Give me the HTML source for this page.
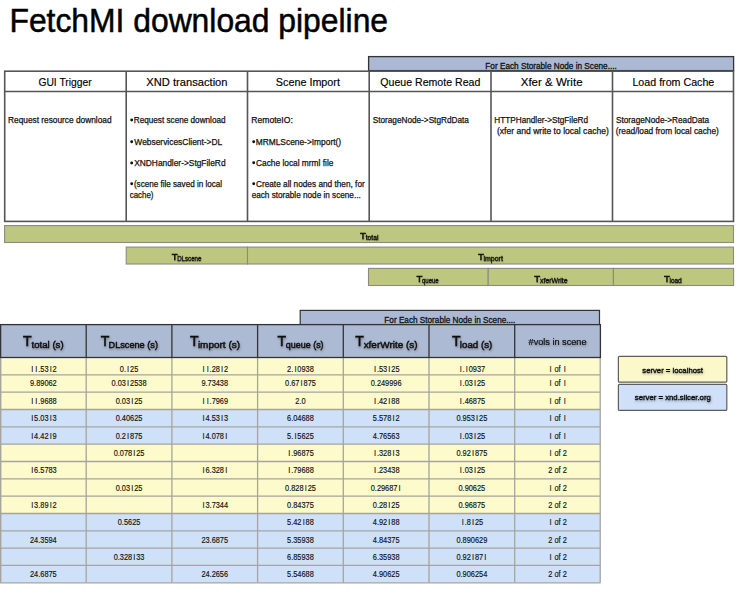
<!DOCTYPE html>
<html><head><meta charset="utf-8"><style>
html,body{margin:0;padding:0;background:#fff;width:751px;height:599px;overflow:hidden}
svg{display:block}
text{font-family:"Liberation Sans",sans-serif}
</style></head><body>
<svg width="751" height="599" viewBox="0 0 751 599">
<defs>
<filter id="sh" x="-20%" y="-50%" width="140%" height="200%"><feDropShadow dx="0.3" dy="0.8" stdDeviation="0.6" flood-color="#000" flood-opacity="0.3"/></filter>
<filter id="sh2" x="-20%" y="-50%" width="140%" height="200%"><feDropShadow dx="0.5" dy="1.2" stdDeviation="1" flood-color="#000" flood-opacity="0.35"/></filter>
</defs>
<rect width="751" height="599" fill="#fff"/>
<text x="9.45" y="31.80" font-size="33" fill="#000" text-anchor="start" textLength="378.62" lengthAdjust="spacingAndGlyphs" stroke="#000" stroke-width="0.5" >FetchMI download pipeline</text>
<rect x="368.6" y="56.6" width="365" height="14" fill="#abb9d4" stroke="#333" stroke-width="1.3"/>
<text x="485.34" y="68.60" font-size="8.8" fill="#111" text-anchor="start" textLength="131.43" lengthAdjust="spacingAndGlyphs" stroke="#111" stroke-width="0.3" >For Each Storable Node in Scene....</text>
<rect x="4.7" y="71.2" width="728.8" height="150.2" fill="#fff" stroke="#555" stroke-width="1.6"/>
<line x1="4.7" y1="91.5" x2="733.5" y2="91.5" stroke="#555" stroke-width="1.6"/>
<line x1="126.2" y1="71.2" x2="126.2" y2="221.4" stroke="#555" stroke-width="1.6"/>
<line x1="247.5" y1="71.2" x2="247.5" y2="221.4" stroke="#555" stroke-width="1.6"/>
<line x1="369.2" y1="71.2" x2="369.2" y2="221.4" stroke="#555" stroke-width="1.6"/>
<line x1="491" y1="71.2" x2="491" y2="221.4" stroke="#555" stroke-width="1.6"/>
<line x1="612.5" y1="71.2" x2="612.5" y2="221.4" stroke="#555" stroke-width="1.6"/>
<text x="38.38" y="85.60" font-size="11" fill="#000" text-anchor="start" textLength="53.30" lengthAdjust="spacingAndGlyphs" stroke="#000" stroke-width="0.15" >GUI Trigger</text>
<text x="146.32" y="85.60" font-size="11" fill="#000" text-anchor="start" textLength="81.21" lengthAdjust="spacingAndGlyphs" stroke="#000" stroke-width="0.15" >XND transaction</text>
<text x="275.81" y="85.60" font-size="11" fill="#000" text-anchor="start" textLength="64.17" lengthAdjust="spacingAndGlyphs" stroke="#000" stroke-width="0.15" >Scene Import</text>
<text x="380.32" y="85.60" font-size="11" fill="#000" text-anchor="start" textLength="99.97" lengthAdjust="spacingAndGlyphs" stroke="#000" stroke-width="0.15" >Queue Remote Read</text>
<text x="520.71" y="85.60" font-size="11" fill="#000" text-anchor="start" textLength="61.83" lengthAdjust="spacingAndGlyphs" stroke="#000" stroke-width="0.15" >Xfer &amp; Write</text>
<text x="632.45" y="85.60" font-size="11" fill="#000" text-anchor="start" textLength="81.85" lengthAdjust="spacingAndGlyphs" stroke="#000" stroke-width="0.15" >Load from Cache</text>
<text x="8.03" y="123.40" font-size="8.7" fill="#111" text-anchor="start" textLength="103.53" lengthAdjust="spacingAndGlyphs" stroke="#111" stroke-width="0.25" >Request resource download</text>
<circle cx="131.70" cy="120.00" r="1.45" fill="#111"/>
<text x="133.75" y="123.20" font-size="8.7" fill="#111" text-anchor="start" textLength="91.79" lengthAdjust="spacingAndGlyphs" stroke="#111" stroke-width="0.25" >Request scene download</text>
<circle cx="131.70" cy="141.80" r="1.45" fill="#111"/>
<text x="134.36" y="145.00" font-size="8.7" fill="#111" text-anchor="start" textLength="87.92" lengthAdjust="spacingAndGlyphs" stroke="#111" stroke-width="0.25" >WebservicesClient-&gt;DL</text>
<circle cx="131.70" cy="163.00" r="1.45" fill="#111"/>
<text x="134.19" y="166.20" font-size="8.7" fill="#111" text-anchor="start" textLength="91.36" lengthAdjust="spacingAndGlyphs" stroke="#111" stroke-width="0.25" >XNDHandler-&gt;StgFileRd</text>
<circle cx="131.70" cy="183.80" r="1.45" fill="#111"/>
<text x="133.91" y="187.00" font-size="8.7" fill="#111" text-anchor="start" textLength="88.21" lengthAdjust="spacingAndGlyphs" stroke="#111" stroke-width="0.25" >(scene file saved in local</text>
<text x="129.68" y="197.80" font-size="8.7" fill="#111" text-anchor="start" textLength="23.81" lengthAdjust="spacingAndGlyphs" stroke="#111" stroke-width="0.25" >cache)</text>
<text x="251.31" y="123.20" font-size="8.7" fill="#111" text-anchor="start" textLength="41.50" lengthAdjust="spacingAndGlyphs" stroke="#111" stroke-width="0.25" >RemoteIO:</text>
<circle cx="253.70" cy="141.80" r="1.45" fill="#111"/>
<text x="255.73" y="145.00" font-size="8.7" fill="#111" text-anchor="start" textLength="85.39" lengthAdjust="spacingAndGlyphs" stroke="#111" stroke-width="0.25" >MRMLScene-&gt;Import()</text>
<circle cx="253.70" cy="162.80" r="1.45" fill="#111"/>
<text x="255.98" y="166.00" font-size="8.7" fill="#111" text-anchor="start" textLength="77.40" lengthAdjust="spacingAndGlyphs" stroke="#111" stroke-width="0.25" >Cache local mrml file</text>
<circle cx="253.70" cy="183.80" r="1.45" fill="#111"/>
<text x="255.99" y="187.00" font-size="8.7" fill="#111" text-anchor="start" textLength="108.74" lengthAdjust="spacingAndGlyphs" stroke="#111" stroke-width="0.25" >Create all nodes and then, for</text>
<text x="251.67" y="198.00" font-size="8.7" fill="#111" text-anchor="start" textLength="109.08" lengthAdjust="spacingAndGlyphs" stroke="#111" stroke-width="0.25" >each storable node in scene...</text>
<text x="372.73" y="123.20" font-size="8.7" fill="#111" text-anchor="start" textLength="96.09" lengthAdjust="spacingAndGlyphs" stroke="#111" stroke-width="0.25" >StorageNode-&gt;StgRdData</text>
<text x="494.34" y="123.20" font-size="8.7" fill="#111" text-anchor="start" textLength="93.70" lengthAdjust="spacingAndGlyphs" stroke="#111" stroke-width="0.25" >HTTPHandler-&gt;StgFileRd</text>
<text x="496.99" y="134.00" font-size="8.7" fill="#111" text-anchor="start" textLength="111.84" lengthAdjust="spacingAndGlyphs" stroke="#111" stroke-width="0.25" >(xfer and write to local cache)</text>
<text x="615.93" y="123.20" font-size="8.7" fill="#111" text-anchor="start" textLength="93.30" lengthAdjust="spacingAndGlyphs" stroke="#111" stroke-width="0.25" >StorageNode-&gt;ReadData</text>
<text x="615.80" y="134.00" font-size="8.7" fill="#111" text-anchor="start" textLength="103.04" lengthAdjust="spacingAndGlyphs" stroke="#111" stroke-width="0.25" >(read/load from local cache)</text>
<rect x="4.6" y="225.6" width="728.90" height="16.90" fill="#bec77f" stroke="#8a8a80" stroke-width="1.1"/>
<rect x="126.2" y="247.1" width="121.30" height="16.90" fill="#bec77f" stroke="#8a8a80" stroke-width="1.1"/>
<rect x="247.5" y="247.1" width="486.00" height="16.90" fill="#bec77f" stroke="#8a8a80" stroke-width="1.1"/>
<rect x="368.5" y="268.4" width="119.70" height="17.10" fill="#bec77f" stroke="#8a8a80" stroke-width="1.1"/>
<rect x="488.2" y="268.4" width="125.20" height="17.10" fill="#bec77f" stroke="#8a8a80" stroke-width="1.1"/>
<rect x="613.4" y="268.4" width="120.20" height="17.10" fill="#bec77f" stroke="#8a8a80" stroke-width="1.1"/>
<g filter="url(#sh)">
<text x="359.91" y="239.10" font-size="9.6" fill="#111" text-anchor="start" stroke="#111" stroke-width="0.45" >T</text>
<text x="365.66" y="239.90" font-size="7.2" fill="#111" text-anchor="start" textLength="12.78" lengthAdjust="spacingAndGlyphs" stroke="#111" stroke-width="0.3" >total</text>
</g>
<g filter="url(#sh)">
<text x="171.81" y="260.20" font-size="9.6" fill="#111" text-anchor="start" stroke="#111" stroke-width="0.45" >T</text>
<text x="177.17" y="261.00" font-size="7.2" fill="#111" text-anchor="start" textLength="24.32" lengthAdjust="spacingAndGlyphs" stroke="#111" stroke-width="0.3" >DLscene</text>
</g>
<g filter="url(#sh)">
<text x="478.01" y="260.20" font-size="9.6" fill="#111" text-anchor="start" stroke="#111" stroke-width="0.45" >T</text>
<text x="483.41" y="261.00" font-size="7.2" fill="#111" text-anchor="start" textLength="19.45" lengthAdjust="spacingAndGlyphs" stroke="#111" stroke-width="0.3" >import</text>
</g>
<g filter="url(#sh)">
<text x="416.41" y="282.00" font-size="9.6" fill="#111" text-anchor="start" stroke="#111" stroke-width="0.45" >T</text>
<text x="422.02" y="282.80" font-size="7.2" fill="#111" text-anchor="start" textLength="16.65" lengthAdjust="spacingAndGlyphs" stroke="#111" stroke-width="0.3" >queue</text>
</g>
<g filter="url(#sh)">
<text x="534.31" y="282.00" font-size="9.6" fill="#111" text-anchor="start" stroke="#111" stroke-width="0.45" >T</text>
<text x="540.09" y="282.80" font-size="7.2" fill="#111" text-anchor="start" textLength="27.53" lengthAdjust="spacingAndGlyphs" stroke="#111" stroke-width="0.3" >xferWrite</text>
</g>
<g filter="url(#sh)">
<text x="664.01" y="282.00" font-size="9.6" fill="#111" text-anchor="start" stroke="#111" stroke-width="0.45" >T</text>
<text x="669.44" y="282.80" font-size="7.2" fill="#111" text-anchor="start" textLength="12.29" lengthAdjust="spacingAndGlyphs" stroke="#111" stroke-width="0.3" >load</text>
</g>
<rect x="300.2" y="310.4" width="299.3" height="14.2" fill="#abb9d4" stroke="#333" stroke-width="1.2"/>
<text x="384.35" y="322.90" font-size="8.8" fill="#111" text-anchor="start" textLength="131.03" lengthAdjust="spacingAndGlyphs" stroke="#111" stroke-width="0.3" >For Each Storable Node in Scene....</text>
<rect x="0" y="324.6" width="600.4" height="32.90" fill="#adbad3"/>
<rect x="0" y="357.50" width="600.4" height="17.33" fill="#fdfbcc"/>
<rect x="0" y="374.83" width="600.4" height="17.33" fill="#fdfbcc"/>
<rect x="0" y="392.16" width="600.4" height="17.33" fill="#fdfbcc"/>
<rect x="0" y="409.49" width="600.4" height="17.33" fill="#cfe1f9"/>
<rect x="0" y="426.82" width="600.4" height="17.33" fill="#cfe1f9"/>
<rect x="0" y="444.15" width="600.4" height="17.33" fill="#fdfbcc"/>
<rect x="0" y="461.48" width="600.4" height="17.33" fill="#fdfbcc"/>
<rect x="0" y="478.82" width="600.4" height="17.33" fill="#fdfbcc"/>
<rect x="0" y="496.15" width="600.4" height="17.33" fill="#fdfbcc"/>
<rect x="0" y="513.48" width="600.4" height="17.33" fill="#cfe1f9"/>
<rect x="0" y="530.81" width="600.4" height="17.33" fill="#cfe1f9"/>
<rect x="0" y="548.14" width="600.4" height="17.33" fill="#cfe1f9"/>
<rect x="0" y="565.47" width="600.4" height="17.33" fill="#cfe1f9"/>
<line x1="0" y1="374.83" x2="600.4" y2="374.83" stroke="#a5a59d" stroke-width="1.3"/>
<line x1="0" y1="392.16" x2="600.4" y2="392.16" stroke="#a5a59d" stroke-width="1.3"/>
<line x1="0" y1="409.49" x2="600.4" y2="409.49" stroke="#a5a59d" stroke-width="1.3"/>
<line x1="0" y1="426.82" x2="600.4" y2="426.82" stroke="#a5a59d" stroke-width="1.3"/>
<line x1="0" y1="444.15" x2="600.4" y2="444.15" stroke="#a5a59d" stroke-width="1.3"/>
<line x1="0" y1="461.48" x2="600.4" y2="461.48" stroke="#a5a59d" stroke-width="1.3"/>
<line x1="0" y1="478.82" x2="600.4" y2="478.82" stroke="#a5a59d" stroke-width="1.3"/>
<line x1="0" y1="496.15" x2="600.4" y2="496.15" stroke="#a5a59d" stroke-width="1.3"/>
<line x1="0" y1="513.48" x2="600.4" y2="513.48" stroke="#a5a59d" stroke-width="1.3"/>
<line x1="0" y1="530.81" x2="600.4" y2="530.81" stroke="#a5a59d" stroke-width="1.3"/>
<line x1="0" y1="548.14" x2="600.4" y2="548.14" stroke="#a5a59d" stroke-width="1.3"/>
<line x1="0" y1="565.47" x2="600.4" y2="565.47" stroke="#a5a59d" stroke-width="1.3"/>
<line x1="86.20" y1="357.50" x2="86.20" y2="582.8" stroke="#a5a59d" stroke-width="1.3"/>
<line x1="171.90" y1="357.50" x2="171.90" y2="582.8" stroke="#a5a59d" stroke-width="1.3"/>
<line x1="257.60" y1="357.50" x2="257.60" y2="582.8" stroke="#a5a59d" stroke-width="1.3"/>
<line x1="343.30" y1="357.50" x2="343.30" y2="582.8" stroke="#a5a59d" stroke-width="1.3"/>
<line x1="429.00" y1="357.50" x2="429.00" y2="582.8" stroke="#a5a59d" stroke-width="1.3"/>
<line x1="514.70" y1="357.50" x2="514.70" y2="582.8" stroke="#a5a59d" stroke-width="1.3"/>
<line x1="0.7" y1="357.50" x2="0.7" y2="582.8" stroke="#a5a59d" stroke-width="1.4"/>
<line x1="600.2" y1="357.50" x2="600.2" y2="582.8" stroke="#a5a59d" stroke-width="1.3"/>
<line x1="0" y1="582.8" x2="600.4" y2="582.8" stroke="#a5a59d" stroke-width="1.3"/>
<line x1="86.20" y1="324.6" x2="86.20" y2="357.50" stroke="#333" stroke-width="1.3"/>
<line x1="171.90" y1="324.6" x2="171.90" y2="357.50" stroke="#333" stroke-width="1.3"/>
<line x1="257.60" y1="324.6" x2="257.60" y2="357.50" stroke="#333" stroke-width="1.3"/>
<line x1="343.30" y1="324.6" x2="343.30" y2="357.50" stroke="#333" stroke-width="1.3"/>
<line x1="429.00" y1="324.6" x2="429.00" y2="357.50" stroke="#333" stroke-width="1.3"/>
<line x1="514.70" y1="324.6" x2="514.70" y2="357.50" stroke="#333" stroke-width="1.3"/>
<rect x="0.6" y="324.6" width="599.8" height="32.90" fill="none" stroke="#333" stroke-width="1.3"/>
<g transform="scale(0.88 1)">
<text x="35.40 40.07 43.42 45.76 50.43 56.42 59.77" y="372.50" font-size="8.4" fill="#111" stroke="#111" stroke-width="0.15">II.53I2</text>
<text x="136.14 140.81 144.46 147.81 152.49" y="372.50" font-size="8.4" fill="#111" stroke="#111" stroke-width="0.15">0.I25</text>
<text x="230.17 234.84 238.20 240.53 245.20 251.19 254.54" y="372.50" font-size="8.4" fill="#111" stroke="#111" stroke-width="0.15">II.28I2</text>
<text x="326.24 330.91 334.56 337.92 342.59 347.26 351.93" y="372.50" font-size="8.4" fill="#111" stroke="#111" stroke-width="0.15">2.I0938</text>
<text x="424.94 428.30 430.63 435.30 441.29 444.65 449.32" y="372.50" font-size="8.4" fill="#111" stroke="#111" stroke-width="0.15">I.53I25</text>
<text x="522.33 525.68 529.34 532.69 537.36 542.03 546.70" y="372.50" font-size="8.4" fill="#111" stroke="#111" stroke-width="0.15">I.I0937</text>
<text x="624.39 627.74 630.08 634.75 637.08 640.74" y="372.50" font-size="8.4" fill="#111" stroke="#111" stroke-width="0.15">I of I</text>
<text x="34.08 38.75 41.08 45.76 50.43 55.10 59.77" y="386.23" font-size="8.4" fill="#111" stroke="#111" stroke-width="0.15">9.89062</text>
<text x="126.79 131.47 133.80 138.47 144.46 147.81 152.49 157.16 161.83" y="386.23" font-size="8.4" fill="#111" stroke="#111" stroke-width="0.15">0.03I2538</text>
<text x="228.85 233.52 235.86 240.53 245.20 249.87 254.54" y="386.23" font-size="8.4" fill="#111" stroke="#111" stroke-width="0.15">9.73438</text>
<text x="323.90 328.57 330.91 335.58 341.57 344.92 349.60 354.27" y="386.23" font-size="8.4" fill="#111" stroke="#111" stroke-width="0.15">0.67I875</text>
<text x="421.29 425.96 428.29 432.97 437.64 442.31 446.98 451.65" y="386.23" font-size="8.4" fill="#111" stroke="#111" stroke-width="0.15">0.249996</text>
<text x="522.33 525.68 528.02 532.69 538.68 542.03 546.70" y="386.23" font-size="8.4" fill="#111" stroke="#111" stroke-width="0.15">I.03I25</text>
<text x="624.39 627.74 630.08 634.75 637.08 640.74" y="386.23" font-size="8.4" fill="#111" stroke="#111" stroke-width="0.15">I of I</text>
<text x="35.40 40.07 43.42 45.76 50.43 55.10 59.77" y="404.16" font-size="8.4" fill="#111" stroke="#111" stroke-width="0.15">II.9688</text>
<text x="131.47 136.14 138.47 143.14 149.13 152.49 157.16" y="404.16" font-size="8.4" fill="#111" stroke="#111" stroke-width="0.15">0.03I25</text>
<text x="230.17 234.84 238.20 240.53 245.20 249.87 254.54" y="404.16" font-size="8.4" fill="#111" stroke="#111" stroke-width="0.15">II.7969</text>
<text x="335.58 340.25 342.59" y="404.16" font-size="8.4" fill="#111" stroke="#111" stroke-width="0.15">2.0</text>
<text x="424.94 428.30 430.63 435.30 441.29 444.65 449.32" y="404.16" font-size="8.4" fill="#111" stroke="#111" stroke-width="0.15">I.42I88</text>
<text x="522.33 525.68 528.02 532.69 537.36 542.03 546.70" y="404.16" font-size="8.4" fill="#111" stroke="#111" stroke-width="0.15">I.46875</text>
<text x="624.39 627.74 630.08 634.75 637.08 640.74" y="404.16" font-size="8.4" fill="#111" stroke="#111" stroke-width="0.15">I of I</text>
<text x="35.40 38.75 43.42 45.76 50.43 56.42 59.77" y="421.49" font-size="8.4" fill="#111" stroke="#111" stroke-width="0.15">I5.03I3</text>
<text x="131.47 136.14 138.47 143.14 147.81 152.49 157.16" y="421.49" font-size="8.4" fill="#111" stroke="#111" stroke-width="0.15">0.40625</text>
<text x="230.17 233.52 238.20 240.53 245.20 251.19 254.54" y="421.49" font-size="8.4" fill="#111" stroke="#111" stroke-width="0.15">I4.53I3</text>
<text x="326.24 330.91 333.24 337.92 342.59 347.26 351.93" y="421.49" font-size="8.4" fill="#111" stroke="#111" stroke-width="0.15">6.04688</text>
<text x="423.62 428.30 430.63 435.30 439.97 445.96 449.32" y="421.49" font-size="8.4" fill="#111" stroke="#111" stroke-width="0.15">5.578I2</text>
<text x="518.67 523.35 525.68 530.35 535.02 541.02 544.37 549.04" y="421.49" font-size="8.4" fill="#111" stroke="#111" stroke-width="0.15">0.953I25</text>
<text x="624.39 627.74 630.08 634.75 637.08 640.74" y="421.49" font-size="8.4" fill="#111" stroke="#111" stroke-width="0.15">I of I</text>
<text x="35.40 38.75 43.42 45.76 50.43 56.42 59.77" y="438.82" font-size="8.4" fill="#111" stroke="#111" stroke-width="0.15">I4.42I9</text>
<text x="131.47 136.14 138.47 144.46 147.81 152.49 157.16" y="438.82" font-size="8.4" fill="#111" stroke="#111" stroke-width="0.15">0.2I875</text>
<text x="230.17 233.52 238.20 240.53 245.20 249.87 255.86" y="438.82" font-size="8.4" fill="#111" stroke="#111" stroke-width="0.15">I4.078I</text>
<text x="326.24 330.91 334.56 337.92 342.59 347.26 351.93" y="438.82" font-size="8.4" fill="#111" stroke="#111" stroke-width="0.15">5.I5625</text>
<text x="423.62 428.30 430.63 435.30 439.97 444.65 449.32" y="438.82" font-size="8.4" fill="#111" stroke="#111" stroke-width="0.15">4.76563</text>
<text x="522.33 525.68 528.02 532.69 538.68 542.03 546.70" y="438.82" font-size="8.4" fill="#111" stroke="#111" stroke-width="0.15">I.03I25</text>
<text x="624.39 627.74 630.08 634.75 637.08 640.74" y="438.82" font-size="8.4" fill="#111" stroke="#111" stroke-width="0.15">I of I</text>
<text x="129.13 133.80 136.13 140.81 145.48 151.47 154.82 159.49" y="456.15" font-size="8.4" fill="#111" stroke="#111" stroke-width="0.15">0.078I25</text>
<text x="327.56 330.91 333.24 337.92 342.59 347.26 351.93" y="456.15" font-size="8.4" fill="#111" stroke="#111" stroke-width="0.15">I.96875</text>
<text x="424.94 428.30 430.63 435.30 439.97 445.96 449.32" y="456.15" font-size="8.4" fill="#111" stroke="#111" stroke-width="0.15">I.328I3</text>
<text x="518.67 523.35 525.68 530.35 536.34 539.70 544.37 549.04" y="456.15" font-size="8.4" fill="#111" stroke="#111" stroke-width="0.15">0.92I875</text>
<text x="624.39 627.74 630.08 634.75 637.08 639.42" y="456.15" font-size="8.4" fill="#111" stroke="#111" stroke-width="0.15">I of 2</text>
<text x="35.40 38.75 43.42 45.76 50.43 55.10 59.77" y="473.48" font-size="8.4" fill="#111" stroke="#111" stroke-width="0.15">I6.5783</text>
<text x="230.17 233.52 238.20 240.53 245.20 249.87 255.86" y="473.48" font-size="8.4" fill="#111" stroke="#111" stroke-width="0.15">I6.328I</text>
<text x="327.56 330.91 333.24 337.92 342.59 347.26 351.93" y="473.48" font-size="8.4" fill="#111" stroke="#111" stroke-width="0.15">I.79688</text>
<text x="424.94 428.30 430.63 435.30 439.97 444.65 449.32" y="473.48" font-size="8.4" fill="#111" stroke="#111" stroke-width="0.15">I.23438</text>
<text x="522.33 525.68 528.02 532.69 538.68 542.03 546.70" y="473.48" font-size="8.4" fill="#111" stroke="#111" stroke-width="0.15">I.03I25</text>
<text x="623.07 627.74 630.08 634.75 637.08 639.42" y="473.48" font-size="8.4" fill="#111" stroke="#111" stroke-width="0.15">2 of 2</text>
<text x="131.47 136.14 138.47 143.14 149.13 152.49 157.16" y="490.82" font-size="8.4" fill="#111" stroke="#111" stroke-width="0.15">0.03I25</text>
<text x="323.90 328.57 330.91 335.58 340.25 346.24 349.60 354.27" y="490.82" font-size="8.4" fill="#111" stroke="#111" stroke-width="0.15">0.828I25</text>
<text x="421.29 425.96 428.29 432.97 437.64 442.31 446.98 452.97" y="490.82" font-size="8.4" fill="#111" stroke="#111" stroke-width="0.15">0.29687I</text>
<text x="521.01 525.68 528.02 532.69 537.36 542.03 546.70" y="490.82" font-size="8.4" fill="#111" stroke="#111" stroke-width="0.15">0.90625</text>
<text x="624.39 627.74 630.08 634.75 637.08 639.42" y="490.82" font-size="8.4" fill="#111" stroke="#111" stroke-width="0.15">I of 2</text>
<text x="35.40 38.75 43.42 45.76 50.43 56.42 59.77" y="508.15" font-size="8.4" fill="#111" stroke="#111" stroke-width="0.15">I3.89I2</text>
<text x="230.17 233.52 238.20 240.53 245.20 249.87 254.54" y="508.15" font-size="8.4" fill="#111" stroke="#111" stroke-width="0.15">I3.7344</text>
<text x="326.24 330.91 333.24 337.92 342.59 347.26 351.93" y="508.15" font-size="8.4" fill="#111" stroke="#111" stroke-width="0.15">0.84375</text>
<text x="423.62 428.30 430.63 435.30 441.29 444.65 449.32" y="508.15" font-size="8.4" fill="#111" stroke="#111" stroke-width="0.15">0.28I25</text>
<text x="521.01 525.68 528.02 532.69 537.36 542.03 546.70" y="508.15" font-size="8.4" fill="#111" stroke="#111" stroke-width="0.15">0.96875</text>
<text x="623.07 627.74 630.08 634.75 637.08 639.42" y="508.15" font-size="8.4" fill="#111" stroke="#111" stroke-width="0.15">2 of 2</text>
<text x="133.80 138.47 140.81 145.48 150.15 154.82" y="525.48" font-size="8.4" fill="#111" stroke="#111" stroke-width="0.15">0.5625</text>
<text x="326.24 330.91 333.24 337.92 343.91 347.26 351.93" y="525.48" font-size="8.4" fill="#111" stroke="#111" stroke-width="0.15">5.42I88</text>
<text x="423.62 428.30 430.63 435.30 441.29 444.65 449.32" y="525.48" font-size="8.4" fill="#111" stroke="#111" stroke-width="0.15">4.92I88</text>
<text x="524.67 528.02 530.35 536.34 539.70 544.37" y="525.48" font-size="8.4" fill="#111" stroke="#111" stroke-width="0.15">I.8I25</text>
<text x="624.39 627.74 630.08 634.75 637.08 639.42" y="525.48" font-size="8.4" fill="#111" stroke="#111" stroke-width="0.15">I of 2</text>
<text x="34.08 38.75 43.42 45.76 50.43 55.10 59.77" y="542.81" font-size="8.4" fill="#111" stroke="#111" stroke-width="0.15">24.3594</text>
<text x="228.85 233.52 238.20 240.53 245.20 249.87 254.54" y="542.81" font-size="8.4" fill="#111" stroke="#111" stroke-width="0.15">23.6875</text>
<text x="326.24 330.91 333.24 337.92 342.59 347.26 351.93" y="542.81" font-size="8.4" fill="#111" stroke="#111" stroke-width="0.15">5.35938</text>
<text x="423.62 428.30 430.63 435.30 439.97 444.65 449.32" y="542.81" font-size="8.4" fill="#111" stroke="#111" stroke-width="0.15">4.84375</text>
<text x="518.67 523.35 525.68 530.35 535.02 539.70 544.37 549.04" y="542.81" font-size="8.4" fill="#111" stroke="#111" stroke-width="0.15">0.890629</text>
<text x="623.07 627.74 630.08 634.75 637.08 639.42" y="542.81" font-size="8.4" fill="#111" stroke="#111" stroke-width="0.15">2 of 2</text>
<text x="129.13 133.80 136.13 140.81 145.48 151.47 154.82 159.49" y="560.14" font-size="8.4" fill="#111" stroke="#111" stroke-width="0.15">0.328I33</text>
<text x="326.24 330.91 333.24 337.92 342.59 347.26 351.93" y="560.14" font-size="8.4" fill="#111" stroke="#111" stroke-width="0.15">6.85938</text>
<text x="423.62 428.30 430.63 435.30 439.97 444.65 449.32" y="560.14" font-size="8.4" fill="#111" stroke="#111" stroke-width="0.15">6.35938</text>
<text x="518.67 523.35 525.68 530.35 536.34 539.70 544.37 550.36" y="560.14" font-size="8.4" fill="#111" stroke="#111" stroke-width="0.15">0.92I87I</text>
<text x="624.39 627.74 630.08 634.75 637.08 639.42" y="560.14" font-size="8.4" fill="#111" stroke="#111" stroke-width="0.15">I of 2</text>
<text x="34.08 38.75 43.42 45.76 50.43 55.10 59.77" y="577.47" font-size="8.4" fill="#111" stroke="#111" stroke-width="0.15">24.6875</text>
<text x="228.85 233.52 238.20 240.53 245.20 249.87 254.54" y="577.47" font-size="8.4" fill="#111" stroke="#111" stroke-width="0.15">24.2656</text>
<text x="326.24 330.91 333.24 337.92 342.59 347.26 351.93" y="577.47" font-size="8.4" fill="#111" stroke="#111" stroke-width="0.15">5.54688</text>
<text x="423.62 428.30 430.63 435.30 439.97 444.65 449.32" y="577.47" font-size="8.4" fill="#111" stroke="#111" stroke-width="0.15">4.90625</text>
<text x="518.67 523.35 525.68 530.35 535.02 539.70 544.37 549.04" y="577.47" font-size="8.4" fill="#111" stroke="#111" stroke-width="0.15">0.906254</text>
<text x="623.07 627.74 630.08 634.75 637.08 639.42" y="577.47" font-size="8.4" fill="#111" stroke="#111" stroke-width="0.15">2 of 2</text>
</g>
<g filter="url(#sh2)">
<text x="23.12" y="346.20" font-size="14" fill="#111" text-anchor="start" stroke="#111" stroke-width="0.55" >T</text>
<text x="31.52" y="348.20" font-size="9.6" fill="#111" text-anchor="start" textLength="32.10" lengthAdjust="spacingAndGlyphs" stroke="#111" stroke-width="0.45" >total (s)</text>
</g>
<g filter="url(#sh2)">
<text x="100.72" y="346.20" font-size="14" fill="#111" text-anchor="start" stroke="#111" stroke-width="0.55" >T</text>
<text x="108.53" y="348.20" font-size="9.6" fill="#111" text-anchor="start" textLength="49.43" lengthAdjust="spacingAndGlyphs" stroke="#111" stroke-width="0.45" >DLscene (s)</text>
</g>
<g filter="url(#sh2)">
<text x="190.02" y="346.20" font-size="14" fill="#111" text-anchor="start" stroke="#111" stroke-width="0.55" >T</text>
<text x="197.91" y="348.20" font-size="9.6" fill="#111" text-anchor="start" textLength="42.11" lengthAdjust="spacingAndGlyphs" stroke="#111" stroke-width="0.45" >import (s)</text>
</g>
<g filter="url(#sh2)">
<text x="277.62" y="346.20" font-size="14" fill="#111" text-anchor="start" stroke="#111" stroke-width="0.55" >T</text>
<text x="285.80" y="348.20" font-size="9.6" fill="#111" text-anchor="start" textLength="37.78" lengthAdjust="spacingAndGlyphs" stroke="#111" stroke-width="0.45" >queue (s)</text>
</g>
<g filter="url(#sh2)">
<text x="355.22" y="346.20" font-size="14" fill="#111" text-anchor="start" stroke="#111" stroke-width="0.55" >T</text>
<text x="363.66" y="348.20" font-size="9.6" fill="#111" text-anchor="start" textLength="53.84" lengthAdjust="spacingAndGlyphs" stroke="#111" stroke-width="0.45" >xferWrite (s)</text>
</g>
<g filter="url(#sh2)">
<text x="451.92" y="346.20" font-size="14" fill="#111" text-anchor="start" stroke="#111" stroke-width="0.55" >T</text>
<text x="459.83" y="348.20" font-size="9.6" fill="#111" text-anchor="start" textLength="32.40" lengthAdjust="spacingAndGlyphs" stroke="#111" stroke-width="0.45" >load (s)</text>
</g>
<g filter="url(#sh2)">
<text x="528.55" y="344.80" font-size="9.2" fill="#111" text-anchor="start" textLength="57.98" lengthAdjust="spacingAndGlyphs" stroke="#111" stroke-width="0.2" >#vols in scene</text>
</g>
<rect x="618.4" y="356.3" width="108.4" height="25.9" fill="#fbf8c9" stroke="#5e5e5e" stroke-width="1.2" rx="1"/>
<rect x="618.4" y="384.4" width="108.4" height="26" fill="#cfe0f8" stroke="#5e5e5e" stroke-width="1.2" rx="1"/>
<g filter="url(#sh2)">
<text x="642.27" y="372.70" font-size="8.0" fill="#111" text-anchor="start" textLength="60.71" lengthAdjust="spacingAndGlyphs" stroke="#111" stroke-width="0.38" >server = localhost</text>
<text x="634.77" y="400.40" font-size="8.0" fill="#111" text-anchor="start" textLength="76.04" lengthAdjust="spacingAndGlyphs" stroke="#111" stroke-width="0.38" >server = xnd.slicer.org</text>
</g>
</svg>
</body></html>
